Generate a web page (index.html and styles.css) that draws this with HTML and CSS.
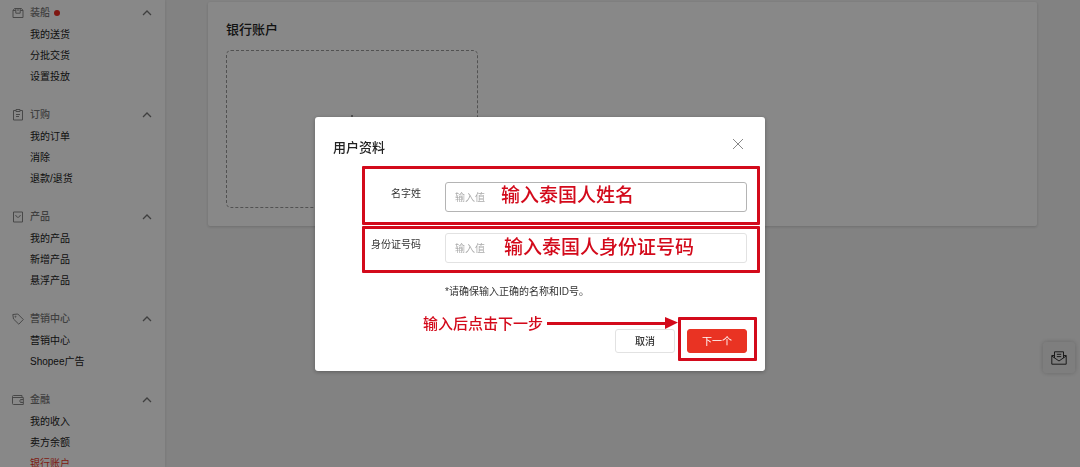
FILE: index.html
```html
<!DOCTYPE html>
<html lang="zh-CN">
<head>
<meta charset="utf-8">
<title>银行账户</title>
<link rel="stylesheet" href="styles.css">
</head>
<body>
<div class="page">
  <nav class="sidebar">
    <section class="group">
      <button class="group-head" type="button">
        <svg class="icon" viewBox="0 0 12 12"><path d="M1 3.500 2.500 1.500h7L11 3.500V10.500H1zM1 3.500h2.800M8.200 3.500H11M3.800 1.500v4.700h4.400V1.500M6 1.500v2.500"/></svg>
        <span>装船</span><i class="dot"></i>
        <svg class="chevron" viewBox="0 0 10 6"><path d="M1 5l4-4 4 4"/></svg>
      </button>
      <a href="#">我的送货</a><a href="#">分批交货</a><a href="#">设置投放</a>
    </section>
    <section class="group">
      <button class="group-head" type="button">
        <svg class="icon" viewBox="0 0 12 12"><path d="M4 1.500H1.500v9.500h9V1.500H8M4 .5h4v2H4zM4 5.500h4M4 7.500h3"/></svg>
        <span>订购</span>
        <svg class="chevron" viewBox="0 0 10 6"><path d="M1 5l4-4 4 4"/></svg>
      </button>
      <a href="#">我的订单</a><a href="#">消除</a><a href="#">退款/退货</a>
    </section>
    <section class="group">
      <button class="group-head" type="button">
        <svg class="icon" viewBox="0 0 12 12"><path d="M1.500 1h9v10h-9zM3.700 4c.4 3 4.200 3 4.600 0"/></svg>
        <span>产品</span>
        <svg class="chevron" viewBox="0 0 10 6"><path d="M1 5l4-4 4 4"/></svg>
      </button>
      <a href="#">我的产品</a><a href="#">新增产品</a><a href="#">悬浮产品</a>
    </section>
    <section class="group">
      <button class="group-head" type="button">
        <svg class="icon" viewBox="0 0 12 12"><path d="M.8 1.500l5-.5 5.500 5.500-4.500 4.700L1.500 6z"/><circle cx="3.500" cy="3.700" r=".5"/></svg>
        <span>营销中心</span>
        <svg class="chevron" viewBox="0 0 10 6"><path d="M1 5l4-4 4 4"/></svg>
      </button>
      <a href="#">营销中心</a><a href="#">Shopee广告</a>
    </section>
    <section class="group">
      <button class="group-head" type="button">
        <svg class="icon" viewBox="0 0 12 12"><path d="M10 3.500V1.500H1.500q-1 0-1 1v7q0 1 1 1h9.800v-7H1M11.300 5.500H8.500q-1.500 1.500 0 3h2.800M9 7h.5"/></svg>
        <span>金融</span>
        <svg class="chevron" viewBox="0 0 10 6"><path d="M1 5l4-4 4 4"/></svg>
      </button>
      <a href="#">我的收入</a><a href="#">卖方余额</a><a class="current" href="#">银行账户</a>
    </section>
  </nav>
  <main class="main">
    <div class="card">
      <h1 class="title">银行账户</h1>
      <button class="add" type="button" aria-label="添加银行账户">
        <svg class="plus" viewBox="0 0 14 14"><path d="M7 0v14M0 7h14"/></svg>
      </button>
    </div>
  </main>
  <button class="chat" type="button" aria-label="消息">
    <svg viewBox="0 0 16 14"><path d="M3.500 4.500H.8v8.700h14.400V4.500h-2.700M.8 5l7.200 5 7.200-5M3.500 7V.8h9V7M5.800 3.300h4.400M5.800 5.600h4.400"/></svg>
  </button>
</div>

<div class="overlay">
  <form class="modal" role="dialog" aria-labelledby="dialog-title">
    <header class="modal-head">
      <h2 class="title" id="dialog-title">用户资料</h2>
      <button class="close" type="button" aria-label="关闭">
        <svg viewBox="0 0 10 10"><path d="M0 0l10 10M10 0L0 10"/></svg>
      </button>
    </header>
    <div class="fields">
      <label for="name">名字姓</label>
      <input class="active" id="name" type="text" placeholder="输入值">
      <label for="idno">身份证号码</label>
      <input id="idno" type="text" placeholder="输入值">
    </div>
    <p class="note">*请确保输入正确的名称和ID号。</p>
    <footer class="actions">
      <button class="btn" type="button">取消</button>
      <button class="btn primary" type="button">下一个</button>
    </footer>

    <div class="mark mark-name"></div>
    <div class="mark mark-id"></div>
    <div class="mark mark-next"></div>
    <span class="hint hint-name">输入泰国人姓名</span>
    <span class="hint hint-id">输入泰国人身份证号码</span>
    <span class="hint hint-next">输入后点击下一步</span>
    <svg class="arrow" viewBox="0 0 131 12"><path d="M0 5h118v-5l13 5.500-13 6.500v-4H0z"/></svg>
  </form>
</div>
</body>
</html>
```
FILE: styles.css
```css
* { box-sizing: border-box; }
body {
  margin: 0;
  font: 10px/21px "Liberation Sans", "Noto Sans CJK SC", sans-serif;
  color: #333;
  background: #f4f4f4;
}
button, input { font: inherit; color: inherit; }
button { padding: 0; border: 0; background: none; }
svg { display: block; fill: none; stroke: currentColor; }

.page { display: flex; height: 100vh; overflow: hidden; }

.sidebar {
  flex: 0 0 165px;
  padding-top: 1px;
  background: #fff;
  box-shadow: 0 0 3px rgba(0, 0, 0, .12);
  overflow: hidden;
}
.group { display: flex; flex-direction: column; margin-bottom: 16px; }
.group-head {
  display: flex;
  align-items: center;
  height: 23px;
  padding: 0 13px 0 12px;
  color: #777;
  font-weight: 500;
}
.icon { width: 12px; height: 12px; margin-right: 6px; stroke-width: 1; color: #888; }
.dot { width: 6px; height: 6px; margin-left: 4px; border-radius: 50%; background: #ee2c20; }
.chevron { width: 10px; height: 6px; margin-left: auto; stroke-width: 1.3; }
.group a { padding-left: 30px; color: #222; text-decoration: none; }
.group a.current { color: #ee3524; }

.main { flex: 1; padding: 2px 43px; }
.card {
  height: 224px;
  padding: 18px;
  border-radius: 2px;
  background: #fff;
  box-shadow: 0 1px 3px rgba(0, 0, 0, .16);
}
.title { margin: 0; font-size: 13px; line-height: 20px; font-weight: 500; color: #222; }
.add {
  display: flex;
  justify-content: center;
  width: 252px;
  height: 158px;
  margin-top: 10px;
  padding-top: 64px;
  border: 1px dashed #999;
  border-radius: 5px;
}
.plus { width: 14px; height: 14px; }

.chat {
  position: fixed;
  right: 5px;
  top: 342px;
  display: grid;
  place-items: center;
  width: 32px;
  height: 31px;
  border-radius: 3px;
  background: #ececec;
  box-shadow: 0 0 5px rgba(0, 0, 0, .22);
}
.chat svg { width: 16px; height: 14px; }

.overlay {
  position: fixed;
  inset: 0;
  display: flex;
  align-items: center;
  justify-content: center;
  padding-top: 21px;
  background: rgba(0, 0, 0, .467);
}
.modal {
  position: relative;
  width: 450px;
  padding: 0 18px 18px;
  border-radius: 3px;
  background: #fff;
  box-shadow: 0 1px 4px rgba(0, 0, 0, .3);
}
.modal-head {
  display: flex;
  justify-content: space-between;
  height: 65px;
  padding-top: 21px;
}
.close { width: 18px; height: 12px; padding: 1px 4px; color: #888; }
.close svg { width: 10px; height: 10px; }
.fields {
  display: grid;
  grid-template-columns: 88px 1fr;
  gap: 21px 24px;
}
.fields label { text-align: right; line-height: 24px; }
.fields input {
  width: 100%;
  height: 30px;
  padding: 0 9px;
  border: 1px solid #e2e2e2;
  border-radius: 3px;
  background: #fff;
}
.fields input.active { border-color: #b4b4b4; }
.fields input::placeholder { color: #aaa; opacity: 1; }
.note { margin: 18px 0 0 112px; line-height: 22px; }
.actions { display: flex; justify-content: flex-end; gap: 12px; margin-top: 26px; }
.btn {
  width: 60px;
  height: 24px;
  border: 1px solid #e2e2e2;
  border-radius: 3px;
  font-weight: 500;
}
.primary { border-color: #e93323; background: #e93323; color: #fff; font-weight: 400; }

.mark { position: absolute; border: 3px solid #d30a1b; border-radius: 1px; pointer-events: none; }
.mark-name { left: 47px; top: 49px; width: 398px; height: 59px; }
.mark-id { left: 47px; top: 109px; width: 398px; height: 47px; }
.mark-next { left: 363px; top: 200px; width: 79px; height: 44px; }
.hint {
  position: absolute;
  font-size: 19px;
  line-height: 24px;
  font-weight: 500;
  white-space: nowrap;
  color: #d30a1b;
  pointer-events: none;
}
.hint-name { left: 186px; top: 67px; }
.hint-id { left: 189px; top: 119px; }
.hint-next { left: 108px; top: 195px; font-size: 15px; }
.arrow {
  position: absolute;
  left: 232px;
  top: 200px;
  width: 131px;
  height: 12px;
  fill: #d30a1b;
  stroke: none;
}
```
